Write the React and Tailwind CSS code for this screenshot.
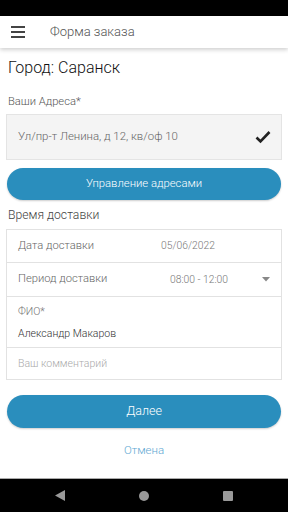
export default function App() {
  const font = { fontFamily: "Roboto, 'Noto Sans', sans-serif" };
  return (
    <div className="w-[288px] h-[512px] flex flex-col bg-white overflow-hidden" style={font}>
      <div className="h-4 bg-black shrink-0" />
      <div className="h-8 shrink-0 flex items-center bg-white shadow-[0_2px_4px_rgba(0,0,0,0.18)] relative z-10">
        <div className="ml-[11px] w-[14px] flex flex-col gap-[3px]">
          <div className="h-[2px] bg-[#444]" />
          <div className="h-[2px] bg-[#444]" />
          <div className="h-[2px] bg-[#444]" />
        </div>
        <div className="ml-[25px] text-[13px] font-light text-[#555]">Форма заказа</div>
      </div>
      <div className="flex-1 flex flex-col px-[6px]">
        <div className="mt-[9px] h-[22px] leading-[22px] pl-[2px] text-[16px] text-[#111] font-light">Город: Саранск</div>
        <div className="mt-[16px] h-[14px] leading-[14px] pl-[2px] text-[11.2px] text-[#555] font-light">Ваши Адреса*</div>
        <div className="mt-[5px] h-[46px] bg-[#f4f4f4] border border-[#e4e4e4] flex items-center justify-between pl-[11px] pr-[10px]">
          <span className="text-[11.4px] text-[#666] font-light">Ул/пр-т Ленина, д 12, кв/оф 10</span>
          <svg width="16" height="14" viewBox="0 0 16 14">
            <path d="M1.5 7.5 L5.5 11.5 L14.5 2" fill="none" stroke="#222" strokeWidth="2.6" />
          </svg>
        </div>
        <div className="mt-[8px] mx-[1px] h-[32px] rounded-full bg-[#2a8ebd] flex items-center justify-center text-white text-[11.3px] font-light shadow-[0_1px_2px_rgba(0,0,0,0.2)]">
          Управление адресами
        </div>
        <div className="mt-[7px] h-[16px] leading-[16px] pl-[2px] text-[12.2px] text-[#444] font-light">Время доставки</div>
        <div className="mt-[6px] border border-[#e2e2e2] flex flex-col">
          <div className="h-[33px] flex items-center border-b border-[#e2e2e2] pl-[11px]">
            <span className="w-[143px] text-[11.2px] text-[#666] font-light">Дата доставки</span>
            <span className="text-[10.3px] text-[#777] font-light">05/06/2022</span>
          </div>
          <div className="h-[34px] flex items-center border-b border-[#e2e2e2] pl-[11px] pr-[11px]">
            <span className="w-[152px] text-[11.2px] text-[#666] font-light">Период доставки</span>
            <span className="text-[10.3px] text-[#777] font-light flex-1">08:00 - 12:00</span>
            <svg width="8" height="5" viewBox="0 0 8 5"><path d="M0 0 H8 L4 4.5 Z" fill="#888" /></svg>
          </div>
          <div className="h-[51px] flex flex-col justify-center border-b border-[#e2e2e2] pl-[11px] gap-[9px]">
            <span className="text-[10.5px] text-[#777] font-light leading-[13px]">ФИО*</span>
            <span className="text-[10.5px] text-[#333] font-light leading-[13px]">Александр Макаров</span>
          </div>
          <div className="h-[31px] flex items-center pl-[11px]">
            <span className="text-[10.5px] text-[#aaa] font-light">Ваш комментарий</span>
          </div>
        </div>
        <div className="mt-[15px] mx-[1px] h-[33px] rounded-full bg-[#2a8ebd] flex items-center justify-center text-white text-[12.5px] font-light shadow-[0_1px_2px_rgba(0,0,0,0.2)]">
          Далее
        </div>
        <div className="mt-[14px] leading-[16px] text-center text-[11.5px] text-[#5ea7d2] font-light">Отмена</div>
      </div>
      <div className="h-[34px] shrink-0 bg-black border-t border-[#aaa] flex items-center justify-between px-[55px]">
        <svg width="10" height="11" viewBox="0 0 10 11"><path d="M10 0 V11 L0 5.5 Z" fill="#999" /></svg>
        <div className="w-[10px] h-[10px] rounded-full bg-[#999]" />
        <div className="w-[10px] h-[10px] rounded-[1px] bg-[#999]" />
      </div>
    </div>
  );
}
